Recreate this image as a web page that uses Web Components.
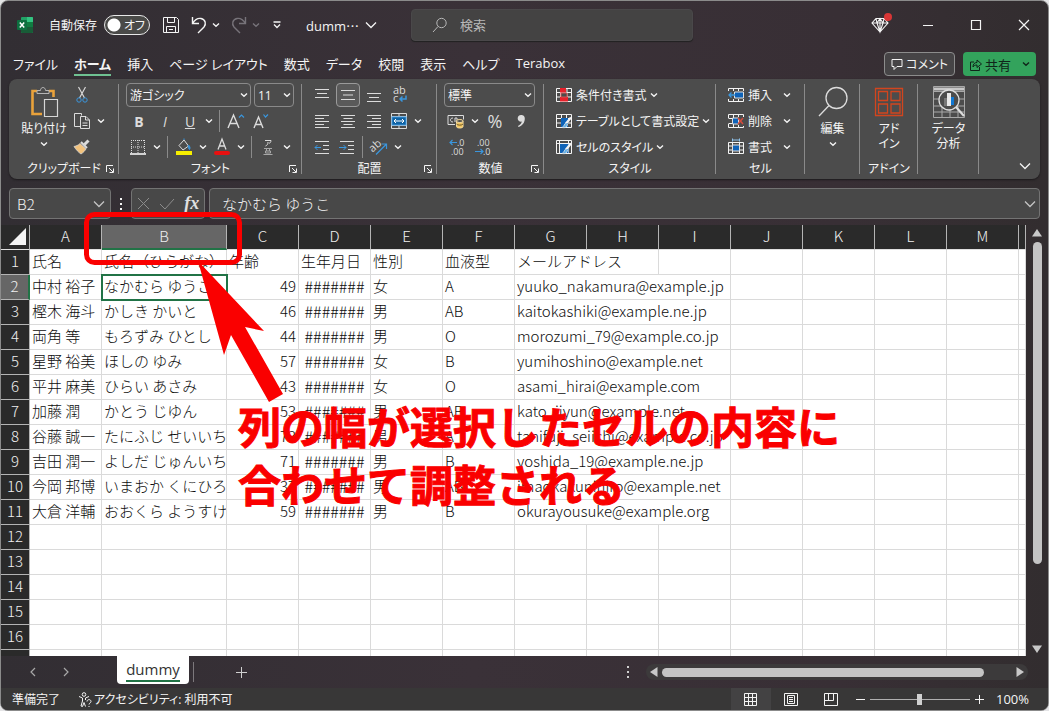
<!DOCTYPE html>
<html lang="ja">
<head>
<meta charset="utf-8">
<title>dummy - Excel</title>
<style>
  body {
    margin: 0;
    background: #e4e4e6;
    font-family: "Open Sans", "Noto Sans CJK JP", sans-serif;
    font-size: 12px;
    color: #f4f4f4;
  }
</style>
</head>
<body>
<app-window>
  <title-bar></title-bar>
  <menu-tabs></menu-tabs>
  <ribbon-bar></ribbon-bar>
  <formula-bar cell="B2" value="なかむら ゆうこ"></formula-bar>
  <sheet-view>
    <sheet-grid></sheet-grid>
    <callout-note slot="note">列の幅が選択したセルの内容に<br>合わせて調整される</callout-note>
  </sheet-view>
  <sheet-tabs name="dummy"></sheet-tabs>
  <status-bar></status-bar>
</app-window>

<script>
// name: [width, height, svg body]
const ICONS = {
  excel: [18, 18, `<g stroke="none"><rect x="5" y="1" width="12" height="16" rx="1" fill="#21a366"/><path d="M11 1h5a1 1 0 0 1 1 1v4h-6z" fill="#33c481"/><path d="M5 9h12v7a1 1 0 0 1-1 1H6a1 1 0 0 1-1-1z" fill="#185c37"/><path d="M11 6h6v5h-6z" fill="#107c41"/><rect x="1" y="4" width="10" height="10" rx="1" fill="#0d7040"/></g><path d="M3.800 6.500l4.400 5M8.200 6.500l-4.400 5" stroke="#fff" stroke-width="1.500"/>`],
  save: [18, 18, `<path d="M1.500 1.500h13l2 2v13h-15zM5.500 1.500v5h7v-5M4.500 16.500v-6h9v6M7 13.500h4"/>`],
  undo: [16, 18, `<path d="M1.500 1v6.500H8M1.500 7.500C4 3.500 7 2 10 2.500c4.500 1 5.500 5.500 3 8.500l-6 6" stroke-width="1.400"/>`],
  redo: [16, 18, `<path d="M14.500 1v6.500H8M14.500 7.500C12 3.500 9 2 6 2.500c-4.500 1-5.500 5.500-3 8.500l6 6" stroke-width="1.400"/>`],
  qat: [10, 8, `<path d="M1.500 1h7M2 3.500l3 3 3-3" stroke-width="1.300"/>`],
  chev: [8, 6, `<path d="M1 1.500l3 2.700 3-2.700" stroke-width="1.400"/>`],
  chevBig: [12, 8, `<path d="M1 1.500l5 5 5-5" stroke-width="1.300"/>`],
  search: [16, 16, `<circle cx="9.500" cy="6" r="4.700"/><path d="M6 9.500L1 15"/>`],
  gem: [18, 18, `<path d="M5 2.500h8l4 4.500-8 9-8-9zM1 7h16M5 2.500L6 7l3 9 3-9 1-4.500M6 7l3-4.500L12 7M9 2.500V16" stroke-width="1.100"/>`],
  min: [12, 12, `<path d="M1 6.500h10"/>`],
  max: [12, 12, `<path d="M1.500 1.500h9v9h-9z" stroke-width="1.200"/>`],
  close: [12, 12, `<path d="M1 1l10 10M11 1L1 11" stroke-width="1.200"/>`],
  comment: [12, 12, `<path d="M1 1.500h10v7H6l-3 3v-3H1z"/>`],
  share: [13, 13, `<path d="M5 4H1.500v8.500h9V9M4 9c0-3 1.500-4.500 4-4.500V2l4.500 4L8 9.500V7C6 7 5 7.500 4 9z"/>`],
  paste: [30, 32, `<path d="M8 5H3.500v23H13M20 5h4.500v6" stroke="#e9a23b" stroke-width="2.600"/><path d="M8 7.500V4.500h3.500c0-4 5-4 5 0H20v3z" fill="#4c4c4c" stroke="#b5b5b5"/><path d="M15.500 13.500h13v17h-13z" fill="#4c4c4c" stroke="#d6d6d6" stroke-width="1.200"/>`],
  cut: [12, 18, `<path d="M2.500 1L8.500 12M9.500 1L3.500 12" stroke="#d6d6d6" stroke-width="1.200"/><circle cx="3" cy="14" r="2.200" stroke="#3a96dd"/><circle cx="9" cy="14" r="2.200" stroke="#3a96dd"/>`],
  copy: [18, 18, `<path d="M7 14.500H1.500v-13h7v2M7.500 4.500h5.500l3.500 3.500v8.500h-9zM12.500 4.500V8h4M9.500 11h5M9.500 13.500h5"/>`],
  brush: [18, 16, `<path d="M15.500 1.500l-4 4" stroke-width="3"/><path d="M8 3l6 6" stroke-width="2"/><path d="M7 4.500c-2 2-4 2.500-6 3C3 10.500 5.500 13.500 8 15c2.500-1.500 4-3.500 5-5z" fill="#f2c27c" stroke="#d6d6d6" stroke-width=".8"/>`],
  borders: [16, 16, `<path d="M1 1.500h14M1 8h14M1.500 1v13M8 1v13M14.500 1v13" stroke-dasharray="1 1"/><path d="M0 15h16" stroke="#fff" stroke-width="1.500"/>`],
  fill: [18, 18, `<path d="M4 7.500L9 2l4.500 6L8 12z" /><path d="M9 2V.5M13.500 7c1.500 1.500 2 3 1 4.500-1-1-1.500-2.500-1-4.500z" fill="#3a96dd" stroke="#3a96dd"/><rect x="1" y="13" width="16" height="4" fill="#f7ee00" stroke="none"/>`],
  fontColor: [18, 18, `<path d="M5 11.500L9 1l4 10.500M6.300 8h5.400" stroke-width="1.300"/><rect x="1" y="13" width="16" height="4" rx="2" fill="#e81010" stroke="none"/>`],
  growFont: [18, 16, `<path d="M1 15L6.500 2 12 15M3 10.500h7" stroke-width="1.400"/><path d="M12 4.500L14.500 2 17 4.500" stroke="#3a96dd" stroke-width="1.200"/>`],
  shrinkFont: [16, 16, `<path d="M1 15L5.500 4 10 15M2.500 11.500h6" stroke-width="1.400"/><path d="M10.500 1.500L12.500 4l2.500-2.500" stroke="#3a96dd" stroke-width="1.200"/>`],
  ruby: [12, 18, `<path d="M3 2.500h6c0 1.500-1 2.500-2 3M6 4c0 2-.5 3-2.500 4"/><path d="M2 10.500h8M3.500 13h5v2h-5zM4.500 10.500v2.500M7.500 10.500v2.500M1.500 16.500h9" stroke="#a8a8a8"/>`],
  top: [16, 16, `<path d="M1 2.500h14M3 6.500h10M1 10.500h14"/>`],
  middle: [16, 16, `<path d="M1 3.500h14M3 8h10M1 12.500h14"/>`],
  bottom: [16, 16, `<path d="M1 6.500h14M3 10.500h10M1 14.500h14"/>`],
  left: [16, 14, `<path d="M1 1.500h14M1 4.500h9M1 7.500h14M1 10.500h9M1 13.500h14"/>`],
  center: [16, 14, `<path d="M1 1.500h14M3.500 4.500h9M1 7.500h14M3.500 10.500h9M1 13.500h14"/>`],
  right: [16, 14, `<path d="M1 1.500h14M6 4.500h9M1 7.500h14M6 10.500h9M1 13.500h14"/>`],
  outdent: [16, 14, `<path d="M1 1.500h14M9 5.500h6M9 9.500h6M1 13.500h14"/><path d="M7 7.500H1M3.500 5L1 7.500 3.500 10" stroke="#3a96dd"/>`],
  indent: [16, 14, `<path d="M1 1.500h14M9 5.500h6M9 9.500h6M1 13.500h14"/><path d="M0 7.500h7M4.500 5L7 7.500 4.500 10" stroke="#3a96dd"/>`],
  wrap: [16, 18, `<text class="big" x="1" y="8">ab</text><text class="big" x="1" y="16">c</text><path d="M14 9.500v3.500H8M10.500 10.500L8 13l2.500 2.500" stroke="#3a96dd" stroke-width="1.500"/>`],
  merge: [16, 16, `<path d="M.5 .5h15v15H.5zM.5 3.500h15M.5 12.500h15M8 .5v3M8 12.500v3" /><rect x="1" y="4" width="14" height="8" fill="#0f63a5" stroke="#3a96dd"/><path d="M3 8h10M5 6L3 8l2 2M11 6l2 2-2 2" stroke="#fff"/>`],
  orient: [18, 18, `<text class="big" x="0" y="12" transform="rotate(-42 5 10)">ab</text><path d="M6 16.500L16 6.500M11.500 6H16.500V11" stroke="#3a96dd" stroke-width="1.200"/>`],
  money: [18, 16, `<path d="M8 11.500H1v-9h15.500v4"/><path d="M6 5c-2 0-2.500 1-2.500 2S4 9 6 9M8 9V5h2v3"/><path d="M9.500 8v5.500c0 2 6.500 2 6.500 0V8" fill="#f2c661" stroke="#f5dca0"/><ellipse cx="12.800" cy="8" rx="3.300" ry="1.500" fill="#4c4c4c" stroke="#f5dca0"/><path d="M9.500 11c1 1.500 5.500 1.500 6.500 0" stroke="#6a5524"/>`],
  comma: [10, 14, `<path d="M5 1a3.300 3.300 0 0 1 3.800 3.400C8.800 8.500 6.500 11.500 2.500 13l-.5-1c2.300-1.200 3.500-2.600 3.800-4.400C3.500 8 1.700 6.500 1.700 4.400 1.700 2.500 3 1.100 5 1z" fill="currentColor" stroke="none"/>`],
  decInc: [16, 18, `<text x="8" y="8">.0</text><text x="2" y="17">.00</text><path d="M8 4.500H1M3.500 2L1 4.500 3.500 7" stroke="#3a96dd" stroke-width="1.200"/>`],
  decDec: [16, 18, `<text x="2" y="8">.00</text><text x="8" y="17">.0</text><path d="M0 13.500h8M5.500 11L8 13.500 5.500 16" stroke="#3a96dd" stroke-width="1.200"/>`],
  cond: [16, 16, `<path d="M.5 1.500h15v13H.5zM4.500 1.500v13M11 1.500v13M.5 5.500h15M.5 10h15"/><path d="M4 1h6v4.500H4zM4 10h8v4.500H4z" fill="#e8212b" stroke="none"/><path d="M5 6h6v4H5z" fill="#4c4c4c" stroke="#c55"/>`],
  tableFmt: [16, 16, `<path d="M.5 1.500h15v13H.5zM5.500 1.500v13M10.500 1.500v13M.5 5.500h15M.5 10h15"/><path d="M5 5h7v9H5z" fill="#0f63b8" stroke="none"/><path d="M15 4.500l-5 6" stroke-width="2.200"/><path d="M10 10c-2 .5-1.500 3.500-4 4.500 3 .8 5.500-.5 5.500-3.500" fill="#5fb0ea" stroke="#e0e0e0" stroke-width=".8"/>`],
  cellStyle: [16, 16, `<path d="M.5 1.500h15v13H.5zM3.500 1.500v13M12.500 1.500v13M.5 4.500h15"/><path d="M4 5h8.500v9H4z" fill="#0f63b8" stroke="none"/><path d="M15 4.500l-5 6" stroke-width="2.200"/><path d="M10 10c-2 .5-1.500 3.500-4 4.500 3 .8 5.500-.5 5.500-3.500" fill="#5fb0ea" stroke="#e0e0e0" stroke-width=".8"/>`],
  insert: [16, 16, `<path d="M.5 4V1.500h15V4M.5 12v2.500h15V12M5.500 1.500V4M10.500 1.500V4M5.500 12v2.500M10.500 12v2.500"/><path d="M6.500 5h9v6h-9z" fill="#0f63b8" stroke="#e0e0e0"/><path d="M7 8H1M3.500 5.500L1 8l2.500 2.500" stroke="#3a96dd" stroke-width="1.300"/>`],
  remove: [16, 16, `<path d="M.5 5V1.500h15V4M.5 11v3.500h15V13M5.500 1.500V5M10.500 1.500V4M5.500 11v3.500M10.500 12v2.500M.5 5.500h4M.5 10.500h4"/><path d="M4.500 5h6v6h-6z" fill="#0f63b8" stroke="#e0e0e0"/><path d="M10 5l5 6M15 5l-5 6" stroke="#d64a3c" stroke-width="1.500"/>`],
  format: [16, 18, `<path d="M.5 4.500h15v11H.5zM4.500 4.500v11M11.500 4.500v11M.5 8h15M.5 12h15"/><path d="M4.500 7h7v6h-7z" fill="#0f63b8" stroke="#e0e0e0"/><path d="M4.500 .5v3M11.500 .5v3M5 2h6" stroke="#8fc3ec"/>`],
  find: [30, 32, `<circle cx="18.500" cy="12" r="10.500" stroke-width="1.300"/><path d="M11 19.500L1 30" stroke-width="1.300"/>`],
  addin: [30, 30, `<g stroke="#d2451e" stroke-width="1.300"><path d="M1.500 1.500h27v27h-27z"/><path d="M4.500 4.500h9v9h-9zM17 4.500h9v9h-9zM4.500 17h9v9h-9zM17 17h9v9h-9z"/></g>`],
  analyze: [32, 32, `<path d="M.5 .5h31v31H.5zM.5 5.500h31M.5 13h31M.5 20h31M.5 26h31M9 20v11M17 20v11M25 20v11" stroke="#a8a8a8"/><path d="M1 3h30" stroke="#c8c8c8" stroke-width="3"/><circle cx="16" cy="14" r="10" fill="#4c4c4c" stroke-width="1.300"/><path d="M11 12h4v8h-4z" fill="#777" stroke="none"/><path d="M14 7h4v13h-4z" fill="#e8e8e8" stroke="none"/><path d="M18 11h3v8h-3z" fill="#0f78d4" stroke="none"/><path d="M23 21l8 9" stroke-width="2.200"/>`],
  launch: [8, 8, `<path d="M.5 7V.5H7M3 3l4 4M7.500 3.500v4h-4"/>`],
  cancel: [13, 13, `<path d="M1 1l11 11M12 1L1 12"/>`],
  enter: [16, 12, `<path d="M1 6l5 5L15 1"/>`],
  prev: [8, 10, `<path d="M6 1L2 5l4 4" stroke-width="1.200"/>`],
  next: [8, 10, `<path d="M2 1l4 4-4 4" stroke-width="1.200"/>`],
  plus: [11, 11, `<path d="M0 5.500h11M5.500 0v11"/>`],
  plusSm: [9, 9, `<path d="M0 4.500h9M4.500 0v9"/>`],
  minus: [9, 9, `<path d="M0 4.500h9"/>`],
  dots: [4, 12, `<path d="M1 0h2v2H1zM1 5h2v2H1zM1 10h2v2H1z" fill="currentColor" stroke="none"/>`],
  triL: [8, 10, `<path d="M7.500 0v10L0 5z" fill="currentColor" stroke="none"/>`],
  triR: [8, 10, `<path d="M.5 0v10L8 5z" fill="currentColor" stroke="none"/>`],
  triU: [10, 8, `<path d="M0 7.500h10L5 0z" fill="currentColor" stroke="none"/>`],
  triD: [10, 8, `<path d="M0 .5h10L5 8z" fill="currentColor" stroke="none"/>`],
  corner: [20, 17, `<path d="M17 0v17H0z" fill="#f4f4f4" stroke="none"/>`],
  access: [14, 15, `<circle cx="6" cy="2.500" r="1.800"/><path d="M1 4.500l3.500 1.500v3L3 14l1.500.5L6 10.500l1.500 4M11 4.500L7.500 6v2M9 9.500c0-2.500 4-2.500 4 0 0 1.500-2 1.500-2 3M11 14v1"/>`],
  viewGrid: [13, 13, `<path d="M.5 .5h12v12H.5zM4.500 .5v12M8.500 .5v12M.5 4.500h12M.5 8.500h12"/>`],
  viewPage: [14, 13, `<path d="M.5 .5h13v12H.5zM3.500 2.500h7v8h-7zM5 4.500h4M5 6.500h4M5 8.500h4"/>`],
  viewBreak: [14, 13, `<path d="M.5 .5h13v12H.5zM4.500 .5v7M9.500 .5v7M.5 7.500h9"/>`]
};

const RESET = `
  button, input, select { font: inherit; color: inherit; background: none; border: 0; padding: 0; margin: 0; }
  button { display: flex; align-items: center; justify-content: center; }
`;

class Base extends HTMLElement {
  constructor() {
    super();
    this.attachShadow({ mode: "open" });
  }

  connectedCallback() {
    this.shadowRoot.innerHTML = `<style>${RESET}${this.css()}</style>${this.html()}`;
  }

  css() { return ""; }
  html() { return "<slot></slot>"; }
}

class UiIcon extends Base {
  css() {
    return `
      :host { display: inline-flex; flex: none; }
      svg { display: block; overflow: visible; fill: none; stroke: currentColor; }
      text { font-family: "Open Sans", sans-serif; font-size: 9px; fill: currentColor; stroke: none; }
      .big { font-size: 11px; }
    `;
  }
  html() {
    const [w, h, body] = ICONS[this.getAttribute("name")];
    return `<svg width="${w}" height="${h}" viewBox="0 0 ${w} ${h}" aria-hidden="true">${body}</svg>`;
  }
}

class AppWindow extends Base {
  css() {
    return `
      :host {
        display: flex;
        flex-direction: column;
        height: 100vh;
        box-sizing: border-box;
        border: 1px solid #8b8b8b;
        border-radius: 8px;
        overflow: hidden;
        background: linear-gradient(90deg, #322e33, #3a3138 45%, #382f35 80%, #322d2f);
      }
    `;
  }
}

class TitleBar extends Base {
  css() {
    return `
      :host { display: flex; align-items: center; height: 48px; }
      .quick { display: flex; align-items: center; width: 410px; box-sizing: border-box; padding-left: 15px; }
      label { display: flex; align-items: center; gap: 7px; margin-left: 15px; white-space: nowrap; }
      .switch { display: grid; align-items: center; width: 46px; height: 20px; }
      .switch > * { grid-area: 1 / 1; }
      .switch input {
        appearance: none;
        width: 46px;
        height: 20px;
        border: 1px solid #e8e8e8;
        border-radius: 10px;
        background: radial-gradient(circle at 9px 9px, #fff 6px, transparent 7px) #4a4a48;
      }
      .switch span { justify-self: end; padding-right: 5px; font-feature-settings: "palt"; }
      .save { margin-left: 12px; }
      .undo { margin-left: 11px; gap: 5px; }
      .off { color: #77737a; }
      .qat { margin-left: 12px; }
      .name { margin-left: 24px; gap: 6px; font-size: 13px; }
      .search {
        display: flex;
        align-items: center;
        gap: 12px;
        flex: 0 1 282px;
        box-sizing: border-box;
        height: 32px;
        padding: 0 20px;
        border-radius: 4px;
        background: #444343;
        color: #b8b8b8;
        border: 1px solid #4a484a;
        box-shadow: 0 1px 1px #222;
      }
      .search input { width: 100%; outline: 0; font-size: 13px; }
      .search input::placeholder { color: #b8b8b8; }
      .controls { display: flex; margin-left: auto; }
      .controls button { width: 48px; height: 40px; }
      .gem { position: relative; }
      .gem i { position: absolute; left: 28px; top: 8px; width: 8px; height: 8px; border-radius: 50%; background: #d93636; }
    `;
  }
  html() {
    return `
      <div class="quick">
        <ui-icon name="excel"></ui-icon>
        <label>自動保存
          <span class="switch"><input type="checkbox" role="switch"><span>オフ</span></span>
        </label>
        <button class="save" aria-label="上書き保存"><ui-icon name="save"></ui-icon></button>
        <button class="undo" aria-label="元に戻す"><ui-icon name="undo"></ui-icon><ui-icon name="chev"></ui-icon></button>
        <button class="undo off" aria-label="やり直し"><ui-icon name="redo"></ui-icon><ui-icon name="chev"></ui-icon></button>
        <button class="qat" aria-label="クイック アクセス"><ui-icon name="qat"></ui-icon></button>
        <button class="name">dumm⋯<ui-icon name="chevBig"></ui-icon></button>
      </div>
      <div class="search">
        <ui-icon name="search"></ui-icon>
        <input type="search" placeholder="検索" aria-label="検索">
      </div>
      <div class="controls">
        <button class="gem" aria-label="Premium"><ui-icon name="gem"></ui-icon><i></i></button>
        <button aria-label="最小化"><ui-icon name="min"></ui-icon></button>
        <button aria-label="最大化"><ui-icon name="max"></ui-icon></button>
        <button aria-label="閉じる"><ui-icon name="close"></ui-icon></button>
      </div>
    `;
  }
}

class MenuTabs extends Base {
  css() {
    return `
      :host { display: flex; align-items: center; height: 30px; padding: 0 12px; white-space: nowrap; }
      nav { display: flex; gap: 16px; font-size: 13px; font-feature-settings: "palt"; }
      nav button { height: 23px; border-bottom: 2px solid transparent; }
      nav .on { font-weight: bold; border-color: #6fc192; }
      .side { display: flex; gap: 8px; margin-left: auto; }
      .side button { height: 24px; box-sizing: border-box; gap: 3px; padding: 0 6px; border-radius: 4px; font-feature-settings: "palt"; }
      .comment { border: 1px solid #8c8c8c; background: #464446; }
      .side .share { width: 73px; background: #33a35c; color: #10251a; font-size: 13px; }
      .share ui-icon:last-child { margin-left: 8px; }
    `;
  }
  html() {
    const tabs = ["ファイル", "ホーム", "挿入", "ページ レイアウト", "数式", "データ", "校閲", "表示", "ヘルプ", "Terabox"];
    return `
      <nav>${tabs.map(t => `<button class="${t == "ホーム" ? "on" : ""}">${t}</button>`).join("")}</nav>
      <div class="side">
        <button class="comment"><ui-icon name="comment"></ui-icon>コメント</button>
        <button class="share"><ui-icon name="share"></ui-icon>共有<ui-icon name="chev"></ui-icon></button>
      </div>
    `;
  }
}

// one icon button of the ribbon, with an optional drop arrow and text
class ToolButton extends Base {
  css() {
    return `
      :host { display: inline-flex; height: 26px; align-items: center; }
      button { height: 24px; box-sizing: border-box; min-width: 24px; color: #dcdcdc; }
      .arrow { min-width: 14px; width: 14px; color: #f4f4f4; }
      :host([wide]) .main { width: 26px; }
      :host([pressed]) .main { border: 1px solid #9a9a9a; border-radius: 4px; background: #5a5a5a; width: 24px; margin: 0 1px; }
      :host([text]) button { gap: 4px; color: #f4f4f4; white-space: nowrap; font-feature-settings: "palt"; }
    `;
  }
  html() {
    const icon = this.getAttribute("icon");
    return `
      <button class="main" aria-label="${this.getAttribute("label") || this.textContent || icon}">
        ${icon ? `<ui-icon name="${icon}"></ui-icon>` : ""}<slot></slot>
      </button>
      ${this.hasAttribute("drop") ? `<button class="arrow" aria-label="その他"><ui-icon name="chev"></ui-icon></button>` : ""}
    `;
  }
}

class BigButton extends Base {
  css() {
    return `
      :host { display: block; }
      button { flex-direction: column; justify-content: flex-start; width: 100%; padding-top: 4px; line-height: 15px; font-feature-settings: "palt"; white-space: nowrap; }
      .pic { display: flex; align-items: center; height: 32px; margin-bottom: 3px; color: #dcdcdc; }
      .drop { height: 15px; align-items: center; }
    `;
  }
  html() {
    return `
      <button>
        <span class="pic"><ui-icon name="${this.getAttribute("icon")}"></ui-icon></span>
        <slot></slot>
        ${this.hasAttribute("drop") ? `<ui-icon class="drop" name="chev"></ui-icon>` : ""}
      </button>
    `;
  }
}

class SelectBox extends Base {
  css() {
    return `
      :host { display: grid; align-items: center; color: #f4f4f4; }
      select, ui-icon { grid-area: 1 / 1; }
      select {
        appearance: none;
        width: 100%;
        height: 24px;
        box-sizing: border-box;
        padding-left: 3px;
        border: 1px solid #8a8a8a;
        border-radius: 4px;
        font-feature-settings: "palt";
      }
      ui-icon { justify-self: end; margin-right: 3px; pointer-events: none; }
    `;
  }
  html() {
    return `
      <select aria-label="${this.getAttribute("label")}"><option>${this.getAttribute("value")}</option></select>
      <ui-icon name="chev"></ui-icon>
    `;
  }
}

class RibbonGroup extends Base {
  css() {
    return `
      :host {
        display: grid;
        grid-template-rows: 78px 18px;
        grid-template-columns: 100%;
        flex: none;
        box-sizing: border-box;
        background: linear-gradient(#8a8a8a, #8a8a8a) right 2px / 1px 90px no-repeat;
      }
      footer { display: flex; align-items: center; font-feature-settings: "palt"; white-space: nowrap; line-height: 18px; }
      footer span { flex: 1; text-align: center; }
      footer button { width: 18px; }
      :host([launch]) footer { padding-left: 18px; }
    `;
  }
  html() {
    return `
      <div><slot></slot></div>
      <footer><span>${this.getAttribute("label") || ""}</span>
      ${this.hasAttribute("launch") ? `<button aria-label="詳細"><ui-icon name="launch"></ui-icon></button>` : ""}</footer>
    `;
  }
}

class RibbonBar extends Base {
  css() {
    return `
      :host {
        display: flex;
        margin: 0 8px;
        height: 100px;
        box-sizing: border-box;
        padding: 3px 0 1px;
        border-radius: 8px;
        background: #4c4c4c;
        box-shadow: 0 1px 2px #1c1a1c;
      }
      .row { display: flex; height: 26px; align-items: center; padding-left: 7px; }
      .row.pad { padding-left: 12px; }
      hr { width: 1px; height: 22px; margin: 0 4px 0 3px; border: 0; background: #8a8a8a; }
      .clip { display: flex; padding-left: 9px; }
      .clip big-button { width: 52px; }
      .clip div { display: flex; flex-direction: column; align-items: flex-start; }
      .font { width: 125px; margin-right: 3px; }
      .size { width: 40px; }
      .num { width: 91px; }
      .pct { font-size: 18px; }
      .g1 { width: 110px; } .g2 { width: 183px; } .g3 { width: 135px; } .g4 { width: 107px; } .g5 { width: 172px; }
      .g6 { width: 89px; } .g7 { width: 55px; } .g8 { width: 58px; } .g9 { width: 61px; }
      .cells tool-button { width: 66px; justify-content: space-between; }
      b, i, u { font-size: 14px; }
      .fold { margin-left: auto; align-self: flex-end; padding: 8px 9px; }
    `;
  }
  html() {
    return `
      <ribbon-group class="g1" label="クリップボード" launch>
        <div class="clip">
          <big-button icon="paste" drop>貼り付け</big-button>
          <div>
            <tool-button icon="cut"></tool-button>
            <tool-button icon="copy" drop></tool-button>
            <tool-button icon="brush"></tool-button>
          </div>
        </div>
      </ribbon-group>
      <ribbon-group class="g2" label="フォント" launch>
        <div class="row">
          <select-box class="font" label="フォント" value="游ゴシック"></select-box>
          <select-box class="size" label="サイズ" value="11"></select-box>
        </div>
        <div class="row">
          <tool-button wide><b>B</b></tool-button>
          <tool-button wide><i>I</i></tool-button>
          <tool-button drop><u>U</u></tool-button>
          <hr>
          <tool-button icon="growFont"></tool-button>
          <tool-button wide icon="shrinkFont"></tool-button>
        </div>
        <div class="row">
          <tool-button icon="borders" drop></tool-button>
          <hr>
          <tool-button icon="fill" drop></tool-button>
          <tool-button icon="fontColor" drop></tool-button>
          <hr>
          <tool-button icon="ruby" drop></tool-button>
        </div>
      </ribbon-group>
      <ribbon-group class="g3" label="配置" launch>
        <div class="row">
          <tool-button wide icon="top"></tool-button>
          <tool-button pressed icon="middle"></tool-button>
          <tool-button wide icon="bottom"></tool-button>
          <tool-button wide icon="wrap"></tool-button>
        </div>
        <div class="row">
          <tool-button wide icon="left"></tool-button>
          <tool-button wide icon="center"></tool-button>
          <tool-button wide icon="right"></tool-button>
          <tool-button icon="merge" drop></tool-button>
        </div>
        <div class="row">
          <tool-button wide icon="outdent"></tool-button>
          <tool-button icon="indent"></tool-button>
          <hr>
          <tool-button icon="orient" drop></tool-button>
        </div>
      </ribbon-group>
      <ribbon-group class="g4" label="数値" launch>
        <div class="row"><select-box class="num" label="表示形式" value="標準"></select-box></div>
        <div class="row">
          <tool-button icon="money" drop></tool-button>
          <tool-button wide><span class="pct">%</span></tool-button>
          <tool-button wide icon="comma"></tool-button>
        </div>
        <div class="row">
          <tool-button wide icon="decInc"></tool-button>
          <tool-button wide icon="decDec"></tool-button>
        </div>
      </ribbon-group>
      <ribbon-group class="g5" label="スタイル">
        <div class="row pad"><tool-button text icon="cond" drop>条件付き書式</tool-button></div>
        <div class="row pad"><tool-button text icon="tableFmt" drop>テーブルとして書式設定</tool-button></div>
        <div class="row pad"><tool-button text icon="cellStyle" drop>セルのスタイル</tool-button></div>
      </ribbon-group>
      <ribbon-group class="g6 cells" label="セル">
        <div class="row pad"><tool-button text icon="insert" drop>挿入</tool-button></div>
        <div class="row pad"><tool-button text icon="remove" drop>削除</tool-button></div>
        <div class="row pad"><tool-button text icon="format" drop>書式</tool-button></div>
      </ribbon-group>
      <ribbon-group class="g7"><big-button icon="find" drop>編集</big-button></ribbon-group>
      <ribbon-group class="g8" label="アドイン"><big-button icon="addin">アド<br>イン</big-button></ribbon-group>
      <ribbon-group class="g9"><big-button icon="analyze">データ<br>分析</big-button></ribbon-group>
      <button class="fold" aria-label="リボンを折りたたむ"><ui-icon name="chevBig"></ui-icon></button>
    `;
  }
}

class FormulaBar extends Base {
  css() {
    return `
      :host { display: flex; align-items: center; height: 31px; padding: 9px 8px 6px; font-family: "Noto Sans CJK JP", sans-serif; font-weight: 300; }
      .box { display: flex; align-items: center; height: 31px; box-sizing: border-box; border: 1px solid #737373; border-radius: 4px; background: #484848; }
      .box > button { color: #c4c4c4; }
      .name { width: 102px; padding: 0 5px 0 7px; }
      .name input { width: 100%; min-width: 0; font-size: 15px; }
      .dots { margin: 0 8px; }
      .fx { width: 74px; justify-content: space-around; margin-right: 4px; }
      .fx .dim { color: #8c8c8c; }
      .fx em { font: italic bold 18px "Liberation Serif", serif; color: #e0e0e0; }
      .formula { flex: 1; padding: 0 3px 0 12px; }
      .formula input { width: 100%; font-size: 15px; }
    `;
  }
  html() {
    return `
      <div class="box name"><input aria-label="名前ボックス" value="${this.getAttribute("cell")}"><button aria-label="名前"><ui-icon name="chevBig"></ui-icon></button></div>
      <ui-icon class="dots" name="dots"></ui-icon>
      <div class="box fx">
        <button class="dim" aria-label="キャンセル"><ui-icon name="cancel"></ui-icon></button>
        <button class="dim" aria-label="入力"><ui-icon name="enter"></ui-icon></button>
        <button><em>fx</em></button>
      </div>
      <div class="box formula"><input aria-label="数式バー" value="${this.getAttribute("value")}"><button aria-label="展開"><ui-icon name="chevBig"></ui-icon></button></div>
    `;
  }
}

const COLS = "ABCDEFGHIJKLM".split("");
const HASH = "#######";
const ROWS = [
  ["氏名", "氏名（ひらがな）", "年齢", "生年月日", "性別", "血液型", "メールアドレス"],
  ["中村 裕子", "なかむら ゆうこ", 49, HASH, "女", "A", "yuuko_nakamura@example.jp"],
  ["樫木 海斗", "かしき かいと", 46, HASH, "男", "AB", "kaitokashiki@example.ne.jp"],
  ["両角 等", "もろずみ ひとし", 44, HASH, "男", "O", "morozumi_79@example.co.jp"],
  ["星野 裕美", "ほしの ゆみ", 57, HASH, "女", "B", "yumihoshino@example.net"],
  ["平井 麻美", "ひらい あさみ", 43, HASH, "女", "O", "asami_hirai@example.com"],
  ["加藤 潤", "かとう じゆん", 53, HASH, "男", "AB", "kato_jiyun@example.net"],
  ["谷藤 誠一", "たにふじ せいいち", 73, HASH, "男", "A", "tanifuji_seiichi@example.co.jp"],
  ["吉田 潤一", "よしだ じゅんいち", 71, HASH, "男", "B", "yoshida_19@example.ne.jp"],
  ["今岡 邦博", "いまおか くにひろ", 37, HASH, "男", "AB", "imaokakunihiro@example.net"],
  ["大倉 洋輔", "おおくら ようすけ", 59, HASH, "男", "B", "okurayousuke@example.org"]
];

class SheetGrid extends Base {
  css() {
    return `
      :host { display: block; overflow: hidden; background: #fff; color: #0c0c0c; font-family: "Noto Sans CJK JP", sans-serif; font-size: 15px; font-weight: 300; }
      table { width: 100%; table-layout: fixed; border-collapse: separate; border-spacing: 0; }
      .head { width: 29px; } .std { width: 72px; } .b { width: 125px; }
      th, td { height: 25px; box-sizing: border-box; padding: 0 0 2px; line-height: 22px; white-space: nowrap; overflow: hidden; }
      th { background: #2a2a2a; color: #f0f0f0; font-weight: 300; border-right: 1px solid #b4b4b4; border-bottom: 1px solid #e0e0e0; }
      tbody th { border-bottom-color: #b4b4b4; }
      th.on { background: #666; }
      thead th.on { border-bottom: 2px solid #217346; padding-bottom: 1px; }
      tbody th.on { border-right: 2px solid #217346; }
      td { padding: 0 2px 2px; text-align: left; border-right: 1px solid #dadada; border-bottom: 1px solid #dadada; }
      td.n { text-align: right; }
      td.hash { text-align: center; font-size: 16px; }
      td.active { outline: 2px solid #217346; outline-offset: -1px; }
      thead ui-icon { display: flex; justify-content: flex-end; }
    `;
  }
  html() {
    const body = [];
    for (let r = 0; r < 17; r++) {
      const row = ROWS[r] || [];
      let cells = "";
      for (let c = 0; c < 14; c++) {
        const v = row[c] === undefined ? "" : row[c];
        // addresses run over the empty cells beside them
        const span = c == 6 && v ? (r == 0 ? 2 : 3) : 1;
        let cls = typeof v == "number" ? "n" : v == HASH ? "hash" : "";
        if (r == 1 && c == 1) cls = "active";
        cells += `<td class="${cls}" colspan="${span}">${v}</td>`;
        c += span - 1;
      }
      body.push(`<tr><th class="${r == 1 ? "on" : ""}" scope="row">${r < 16 ? r + 1 : ""}</th>${cells}</tr>`);
    }
    return `
      <table>
        <colgroup><col class="head"><col class="std"><col class="b">${`<col class="std">`.repeat(11)}<col></colgroup>
        <thead><tr><th><ui-icon name="corner"></ui-icon></th>
        ${COLS.map(c => `<th scope="col" class="${c == "B" ? "on" : ""}">${c}</th>`).join("")}<th></th></tr></thead>
        <tbody>${body.join("")}</tbody>
      </table>
    `;
  }
}

class SheetView extends Base {
  css() {
    return `
      :host { display: flex; flex: 1; min-height: 0; position: relative; }
      ::slotted(sheet-grid) { flex: 1; min-width: 0; }
      .bar { display: flex; flex-direction: column; align-items: center; width: 22px; padding: 4px 0 3px; box-sizing: border-box; gap: 5px; color: #c8c8c8; }
      .track { flex: 1; }
      .thumb { width: 9px; height: 81%; border-radius: 5px; background: #c4c4c4; }
    `;
  }
  html() {
    return `
      <slot></slot>
      <div class="bar">
        <button aria-label="上へ"><ui-icon name="triU"></ui-icon></button>
        <div class="track"><div class="thumb"></div></div>
        <button aria-label="下へ"><ui-icon name="triD"></ui-icon></button>
      </div>
      <slot name="note"></slot>
    `;
  }
}

// red frame, arrow and note drawn over the sheet
class CalloutNote extends Base {
  css() {
    return `
      :host { position: absolute; left: 83px; top: -14px; z-index: 1; pointer-events: none; }
      svg { display: block; position: absolute; left: 0; top: 0; }
      p {
        margin: 185px 0 0 154px;
        color: #fa0000;
        font: 700 43px/58px "Noto Sans CJK JP", sans-serif;
        white-space: nowrap;
        -webkit-text-stroke: 1px #fa0000;
      }
    `;
  }
  html() {
    return `
      <svg width="210" height="200" viewBox="0 0 210 200">
        <rect x="2.500" y="3.500" width="153" height="48" rx="8" fill="none" stroke="#fa0000" stroke-width="5"/>
        <path d="M114 50L180 120 161 116 199 183 185 191 147 124 140 144z" fill="#fa0000"/>
      </svg>
      <p><slot></slot></p>
    `;
  }
}

class SheetTabs extends Base {
  css() {
    return `
      :host { display: flex; align-items: center; height: 32px; flex: none; padding-left: 15px; color: #d0d0d0; }
      .nav { width: 33px; height: 32px; color: #a8a8a8; }
      .tab { align-self: flex-start; width: 72px; height: 28px; margin-left: 35px; border-radius: 0 0 4px 4px; background: #fff; color: #333; font-size: 15px; }
      .tab span { border-bottom: 2px solid #217346; line-height: 22px; }
      .line { width: 1px; height: 20px; margin-left: 4px; background: #7c787c; }
      .add { margin-left: 42px; }
      .dots { margin-left: auto; margin-right: 16px; }
      .scroll { display: flex; align-items: center; width: 37%; height: 16px; margin-right: 20px; border-radius: 8px; background: #3c3a3b; color: #c8c8c8; }
      .scroll button { width: 16px; }
      .track { flex: 1; }
      .thumb { width: 92%; height: 9px; border-radius: 5px; background: #c4c4c4; }
    `;
  }
  html() {
    return `
      <button class="nav" aria-label="前へ"><ui-icon name="prev"></ui-icon></button>
      <button class="nav" aria-label="次へ"><ui-icon name="next"></ui-icon></button>
      <button class="tab"><span>${this.getAttribute("name")}</span></button>
      <div class="line"></div>
      <button class="add" aria-label="新しいシート"><ui-icon name="plus"></ui-icon></button>
      <ui-icon class="dots" name="dots"></ui-icon>
      <div class="scroll">
        <button aria-label="左へ"><ui-icon name="triL"></ui-icon></button>
        <div class="track"><div class="thumb"></div></div>
        <button aria-label="右へ"><ui-icon name="triR"></ui-icon></button>
      </div>
    `;
  }
}

class StatusBar extends Base {
  css() {
    return `
      :host { display: flex; align-items: center; height: 22px; flex: none; padding: 0 19px 0 11px; background: #383737; white-space: nowrap; font-feature-settings: "palt"; }
      .access { gap: 2px; margin-left: 18px; }
      .views { display: flex; margin-left: auto; }
      .views button { width: 40px; height: 22px; }
      .views .on { background: #434243; }
      .zoom { margin-left: 5px; }
      input { appearance: none; width: 100px; height: 14px; margin: 0 5px; background: linear-gradient(#b0b0b0, #b0b0b0) center / 100% 1px no-repeat; }
      input::-webkit-slider-thumb { appearance: none; width: 5px; height: 11px; background: #d0d0d0; }
      output { margin-left: 12px; font-size: 13px; }
    `;
  }
  html() {
    return `
      <span>準備完了</span>
      <button class="access"><ui-icon name="access"></ui-icon>アクセシビリティ: 利用不可</button>
      <div class="views">
        <button class="on" aria-label="標準"><ui-icon name="viewGrid"></ui-icon></button>
        <button aria-label="ページ レイアウト"><ui-icon name="viewPage"></ui-icon></button>
        <button aria-label="改ページ プレビュー"><ui-icon name="viewBreak"></ui-icon></button>
      </div>
      <button class="zoom" aria-label="縮小"><ui-icon name="minus"></ui-icon></button>
      <input type="range" min="0" max="100" value="50" aria-label="ズーム">
      <button aria-label="拡大"><ui-icon name="plusSm"></ui-icon></button>
      <output>100%</output>
    `;
  }
}

customElements.define("ui-icon", UiIcon);
customElements.define("app-window", AppWindow);
customElements.define("title-bar", TitleBar);
customElements.define("menu-tabs", MenuTabs);
customElements.define("tool-button", ToolButton);
customElements.define("big-button", BigButton);
customElements.define("select-box", SelectBox);
customElements.define("ribbon-group", RibbonGroup);
customElements.define("ribbon-bar", RibbonBar);
customElements.define("formula-bar", FormulaBar);
customElements.define("sheet-grid", SheetGrid);
customElements.define("sheet-view", SheetView);
customElements.define("callout-note", CalloutNote);
customElements.define("sheet-tabs", SheetTabs);
customElements.define("status-bar", StatusBar);
</script>
</body>
</html>
